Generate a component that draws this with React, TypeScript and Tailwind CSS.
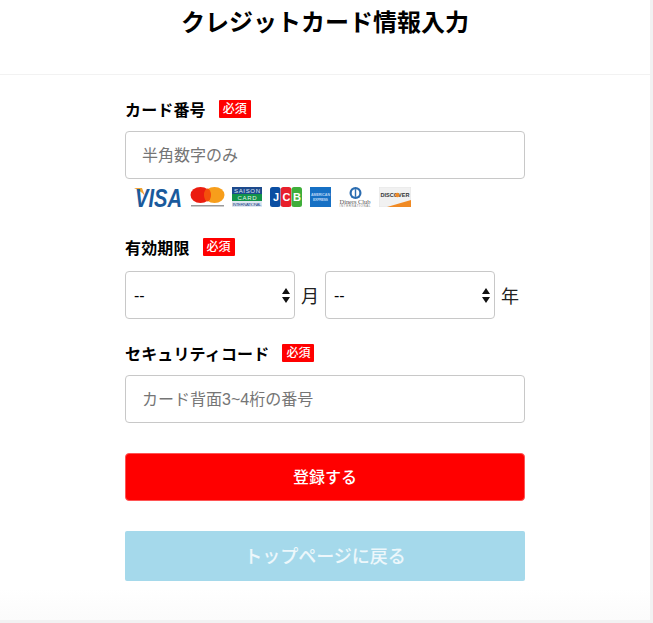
const font = "font-['Liberation_Sans','Noto_Sans_CJK_JP',sans-serif]";

function Required() {
  return (
    <span className="flex h-[18px] w-8 items-center justify-center rounded-[1px] bg-[#ff0000] text-[12px] leading-none font-medium text-white">
      必須
    </span>
  );
}

function Label({ text }: { text: string }) {
  return (
    <div className="flex h-[18px] items-center gap-[13px]">
      <span className="relative top-[2px] text-[16px] leading-none font-bold tracking-[0.15px] text-black">{text}</span>
      <Required />
    </div>
  );
}

function TextField({ placeholder }: { placeholder: string }) {
  return (
    <input
      type="text"
      placeholder={placeholder}
      className="h-12 w-[400px] rounded-[4px] border border-[#c8c8c8] bg-white px-4 pt-[2px] text-[16px] outline-none placeholder:text-[#757575]"
    />
  );
}

function DateSelect() {
  return (
    <div className="relative h-12 w-[170px]">
      <select className="h-12 w-full appearance-none rounded-[4px] border border-[#c8c8c8] bg-white pt-[2px] pl-2 text-[16px] text-black outline-none">
        <option>--</option>
      </select>
      <svg className="pointer-events-none absolute top-[17px] right-[5px]" width="8" height="15" viewBox="0 0 8 15">
        <path d="M4 0L8 6H0Z M0 9H8L4 15Z" fill="#111" />
      </svg>
    </div>
  );
}

function CardLogos() {
  return (
    <div className="ml-[9px] flex h-[22px] items-center gap-[8px]">
      {/* Visa */}
      <svg width="48" height="20" viewBox="0 0 48 20" className="overflow-visible">
        <path d="M0 1H8L11 9C8 5 4 3 0 1Z" fill="#f0a53a" />
        <text x="1" y="19.5" fontFamily="Liberation Sans" fontSize="26" fontWeight="700" fontStyle="italic" fill="#1a5a9c" textLength="47" lengthAdjust="spacingAndGlyphs">
          VISA
        </text>
      </svg>
      {/* Mastercard */}
      <svg width="35" height="20" viewBox="0 0 35 20">
        <ellipse cx="10.5" cy="8" rx="10" ry="8" fill="#eb1c10" />
        <ellipse cx="24.5" cy="8" rx="10" ry="8" fill="#f79e1b" />
        <ellipse cx="17.5" cy="8" rx="3.5" ry="6.5" fill="#f4500c" />
        <rect x="1" y="18" width="33" height="1.5" fill="#9a9a9a" />
      </svg>
      {/* Saison */}
      <svg width="30" height="20" viewBox="0 0 30 20" className="ml-[-1px] overflow-visible">
        <rect width="30" height="7" fill="#1d4a8c" />
        <rect y="7" width="30" height="7" fill="#12934a" />
        <rect y="14" width="30" height="6" fill="#dfe6f1" />
        <text x="15" y="5.8" textAnchor="middle" fontFamily="Liberation Sans" fontSize="6" fill="#dfe9f7" textLength="26">SAISON</text>
        <text x="15" y="12.8" textAnchor="middle" fontFamily="Liberation Sans" fontSize="6" fill="#e2f5ea" textLength="19">CARD</text>
        <text x="15" y="19" textAnchor="middle" fontFamily="Liberation Sans" fontSize="4.4" fill="#1d4a8c" textLength="29">INTERNATIONAL</text>
      </svg>
      {/* JCB */}
      <svg width="32" height="20" viewBox="0 0 32 20" className="overflow-visible">
        <rect width="10.5" height="20" rx="2.5" fill="#0b4ea2" />
        <rect x="10.8" width="10.5" height="20" rx="2.5" fill="#e8202c" />
        <rect x="21.5" width="10.5" height="20" rx="2.5" fill="#3fae3a" />
        <text x="3" y="14" fontFamily="Liberation Sans" fontSize="11" fontWeight="700" fill="#fff">J</text>
        <text x="12.5" y="14" fontFamily="Liberation Sans" fontSize="11" fontWeight="700" fill="#fff">C</text>
        <text x="23" y="14" fontFamily="Liberation Sans" fontSize="11" fontWeight="700" fill="#fff">B</text>
      </svg>
      {/* American Express */}
      <svg width="21" height="20" viewBox="0 0 21 20">
        <rect width="21" height="20" fill="#1670c4" />
        <text x="10.5" y="9" textAnchor="middle" fontFamily="Liberation Sans" fontSize="3.6" fontWeight="700" fill="#b9d6f4" textLength="19">AMERICAN</text>
        <text x="10.5" y="14" textAnchor="middle" fontFamily="Liberation Sans" fontSize="3.6" fontWeight="700" fill="#b9d6f4" textLength="15">EXPRESS</text>
      </svg>
      {/* Diners Club */}
      <svg width="32" height="20" viewBox="0 0 32 20" className="overflow-visible">
        <circle cx="16.5" cy="6" r="6" fill="#2a6cb0" />
        <circle cx="16.5" cy="6" r="3.8" fill="#fff" />
        <rect x="15.8" y="2.2" width="1.4" height="7.6" fill="#2a6cb0" />
        <text x="16" y="16.5" textAnchor="middle" fontFamily="Liberation Serif" fontSize="6.5" fill="#555" textLength="31">Diners Club</text>
        <text x="16" y="20" textAnchor="middle" fontFamily="Liberation Sans" fontSize="3" fill="#777" textLength="31">INTERNATIONAL</text>
      </svg>
      {/* Discover */}
      <svg width="32" height="20" viewBox="0 0 32 20">
        <rect width="32" height="20" fill="#f1f1f1" stroke="#ddd" strokeWidth=".5" />
        <path d="M8 20L32 13V20Z" fill="#f08a24" />
        <text x="16" y="10" textAnchor="middle" fontFamily="Liberation Sans" fontSize="6" fontWeight="700" fill="#333" textLength="29" lengthAdjust="spacingAndGlyphs">DISCOVER</text>
        <circle cx="18.3" cy="8" r="2.2" fill="#f08a24" />
      </svg>
    </div>
  );
}

export default function App() {
  return (
    <div className={`${font} h-[623px] w-[653px] overflow-hidden bg-[#f2f2f2]`}>
      <div className="h-[620px] w-[650px] bg-gradient-to-b from-white from-95% to-[#fbfbfb]">
        <header className="flex h-[75px] justify-center border-b border-[#f2f2f2] pt-[5px]">
          <h1 className="text-[24px] leading-[36px] font-bold text-black">クレジットカード情報入力</h1>
        </header>

        <form className="ml-[125px] flex w-[400px] flex-col pt-[25px]">
          <Label text="カード番号" />
          <div className="mt-[13px]">
            <TextField placeholder="半角数字のみ" />
          </div>
          <div className="mt-[7px]">
            <CardLogos />
          </div>

          <div className="mt-[30px]">
            <Label text="有効期限" />
          </div>
          <div className="mt-[15px] flex items-center gap-[6px]">
            <DateSelect />
            <span className="pt-1 text-[18px] text-[#222]">月</span>
            <DateSelect />
            <span className="pt-1 text-[18px] text-[#222]">年</span>
          </div>

          <div className="mt-[25px]">
            <Label text="セキュリティコード" />
          </div>
          <div className="mt-[13px]">
            <TextField placeholder="カード背面3~4桁の番号" />
          </div>

          <button type="button" className="mt-[30px] h-12 w-[400px] rounded-[4px] border border-[#f55] bg-[#ff0000] pt-[2px] text-[16px] font-medium text-white">
            登録する
          </button>
          <button type="button" className="mt-[30px] h-[50px] w-[400px] rounded-[2px] bg-[#a5d9eb] pt-[2px] text-[18px] font-medium text-white/80">
            トップページに戻る
          </button>
        </form>
      </div>
    </div>
  );
}
